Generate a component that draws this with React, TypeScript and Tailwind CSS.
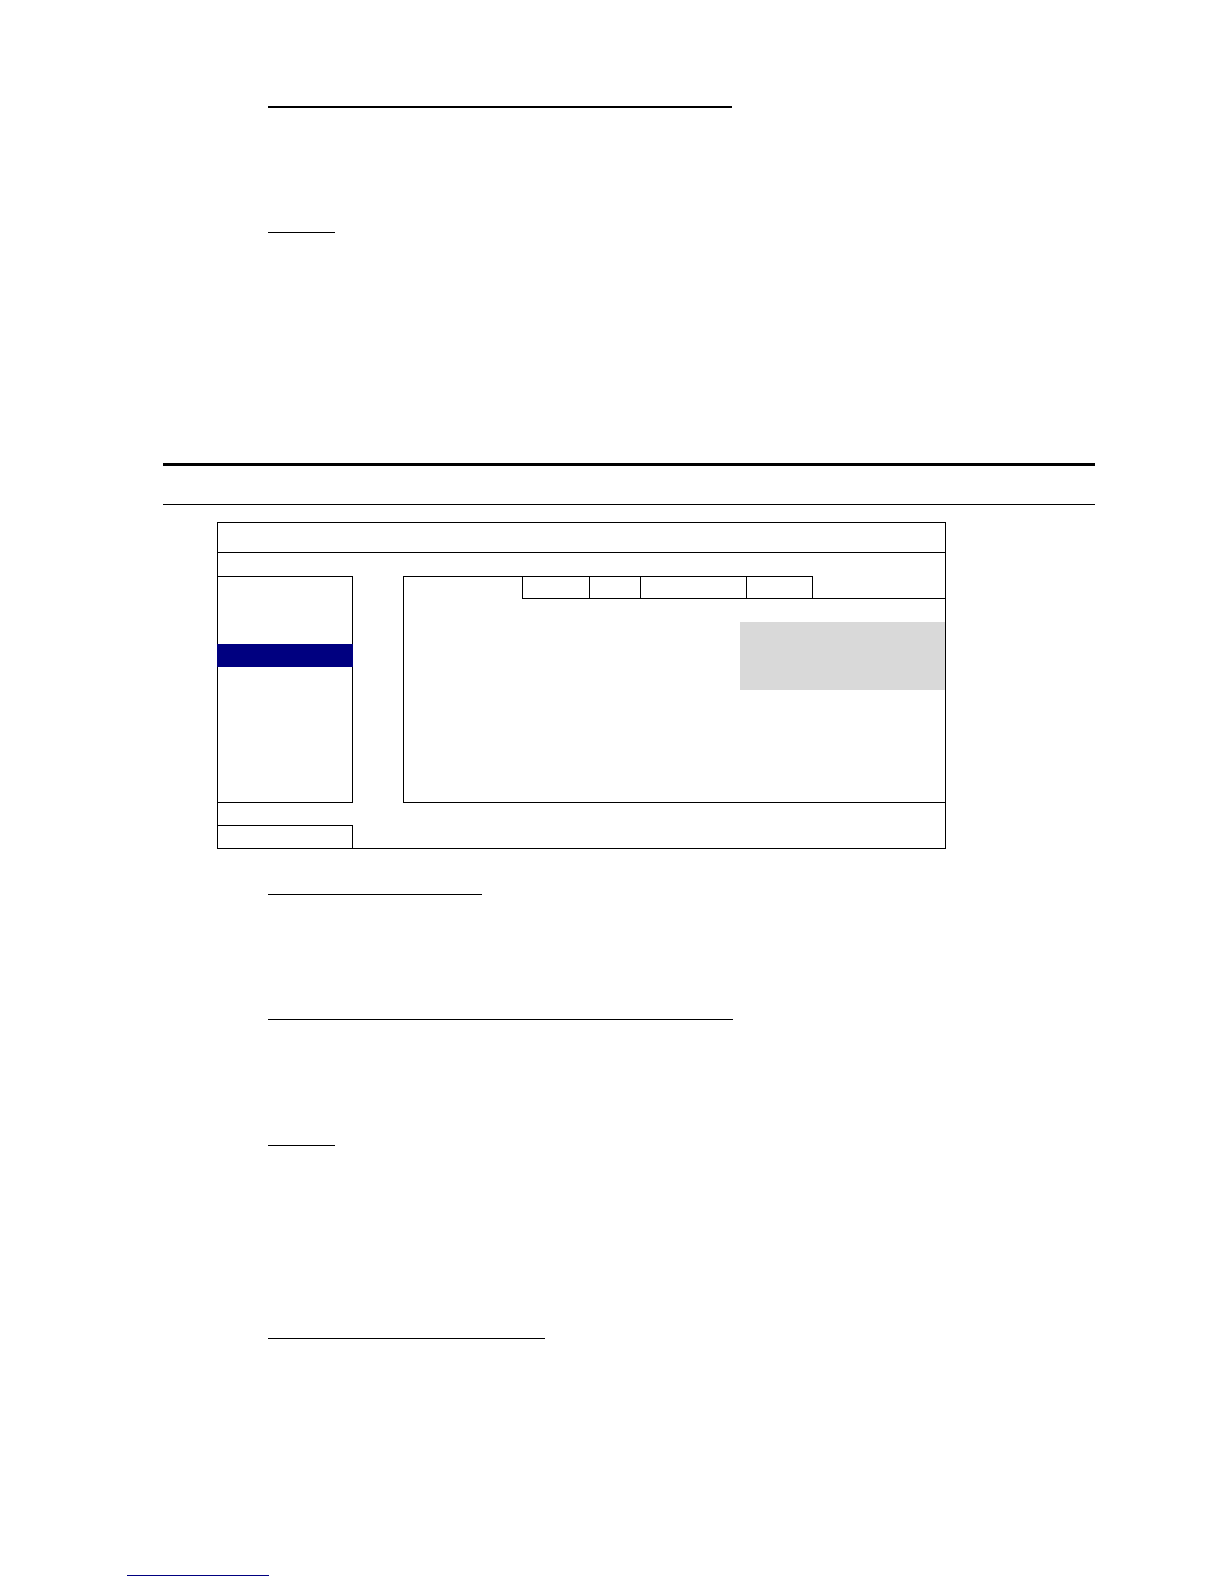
import React from 'react';

// Empty tab strip on top of the right panel
const tabs = [
  { w: 'w-[67px]', cls: 'border-l border-t border-b' },
  { w: 'w-[51px]', cls: 'border-l border-t border-b' },
  { w: 'w-[106px]', cls: 'border-l border-t border-b' },
  { w: 'w-[67px]', cls: 'border-l border-r border-t border-b' },
];

const ScreenMock = () => (
  <div className="ml-[217px] mt-[17px] w-[729px] h-[327px] border border-black flex flex-col">
    <div className="h-[30px] border-b border-black" />
    <div className="h-[23px]" />
    <div className="h-[227px] flex">
      <div className="w-[135px] border-t border-r border-b border-black">
        <div className="mt-[67px] h-[23px] -ml-px w-[136px] bg-[#000080]" />
      </div>
      <div className="w-[50px]" />
      <div className="w-[542px] border-l border-b border-black flex flex-col">
        <div className="h-[23px] flex">
          <div className="w-[118px] border-t border-black" />
          {tabs.map((t, i) => (
            <div key={i} className={`${t.w} ${t.cls} border-black`} />
          ))}
          <div className="flex-1 border-b border-black" />
        </div>
        <div className="mt-[23px] ml-auto w-[205px] h-[68px] bg-[#d9d9d9]" />
      </div>
    </div>
    <div className="h-[22px]" />
    <div className="w-[135px] h-[23px] border-t border-r border-black" />
  </div>
);

export default function App() {
  return (
    <div className="w-[1224px] h-[1584px] bg-white flex flex-col overflow-hidden" style={{ fontFamily: '"Liberation Sans", Arial, sans-serif' }}>
      <div className="ml-[268px] mt-[106px] w-[464px] h-[2px] bg-black" />
      <div className="ml-[268px] mt-[124px] w-[67px] h-px bg-black" />

      <div className="ml-[163px] mt-[230px] w-[932px] h-[3px] bg-black" />
      <div className="ml-[163px] mt-[38px] w-[932px] h-px bg-black" />

      <ScreenMock />

      <div className="ml-[268px] mt-[45px] w-[214px] h-px bg-black" />
      <div className="ml-[268px] mt-[124px] w-[465px] h-px bg-black" />
      <div className="ml-[268px] mt-[125px] w-[67px] h-px bg-black" />
      <div className="ml-[268px] mt-[192px] w-[277px] h-px bg-black" />

      <div className="ml-[127px] mt-[236px] w-[142px] h-px bg-[#000080]" />
    </div>
  );
}
